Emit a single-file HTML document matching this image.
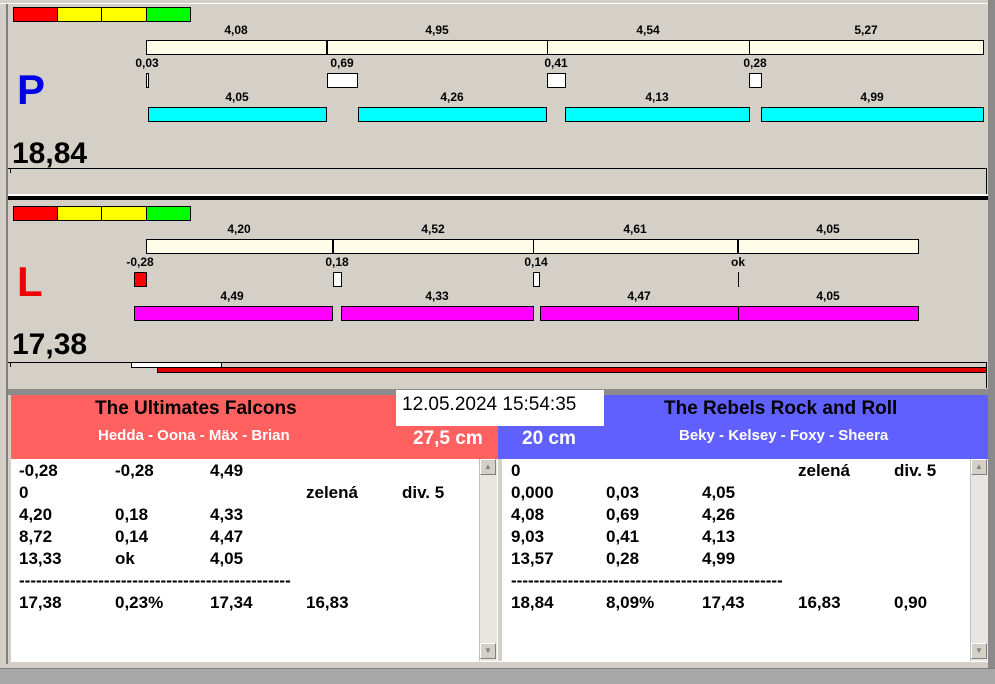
<!DOCTYPE html>
<html><head><meta charset="utf-8"><style>
*{margin:0;padding:0;box-sizing:border-box}
body{width:995px;height:684px;background:#d4d0c8;position:relative;overflow:hidden;font-family:"Liberation Sans",sans-serif;font-weight:bold}
div{position:absolute}
.l{font-size:12px;color:#000;transform:translateX(-50%);white-space:nowrap}
.b{border:1px solid #000}
.t{font-size:17px;color:#000;white-space:nowrap}
.sb{background:#e8e6e0;border-left:1px solid #c0c0c0}
.ar{width:16px;height:16px;background:#d4d0c8;border:1px solid #fff;border-right-color:#808080;border-bottom-color:#808080;font-size:8px;color:#808080;text-align:center;line-height:14px}
</style></head><body>
<div style="left:0;top:0;width:995px;height:4px;background:#d4d0c8;border-bottom:1px solid #fff"></div>
<div style="left:6px;top:4px;width:2px;height:660px;background:#808080"></div>
<div style="left:988px;top:0;width:7px;height:684px;background:#8a8a8a"></div>
<div style="left:0;top:668px;width:995px;height:16px;background:#a8a8a8;border-top:1px solid #808080"></div>

<!-- top panel -->
<div class="b" style="left:13px;top:7px;width:45px;height:15px;background:#f00"></div>
<div class="b" style="left:57px;top:7px;width:45px;height:15px;background:#ff0"></div>
<div class="b" style="left:101px;top:7px;width:46px;height:15px;background:#ff0"></div>
<div class="b" style="left:146px;top:7px;width:45px;height:15px;background:#0f0"></div>
<div class="l" style="left:236px;top:23px">4,08</div><div class="l" style="left:437px;top:23px">4,95</div><div class="l" style="left:648px;top:23px">4,54</div><div class="l" style="left:866px;top:23px">5,27</div>
<div class="b" style="left:146px;top:40px;width:838px;height:15px;background:#fffde8"></div>
<div style="left:326px;top:40px;width:2px;height:15px;background:#000"></div>
<div style="left:547px;top:40px;width:1px;height:15px;background:#000"></div>
<div style="left:749px;top:40px;width:1px;height:15px;background:#000"></div>
<div class="l" style="left:147px;top:56px">0,03</div><div class="l" style="left:342px;top:56px">0,69</div><div class="l" style="left:556px;top:56px">0,41</div><div class="l" style="left:755px;top:56px">0,28</div>
<div class="b" style="left:146px;top:73px;width:3px;height:15px;background:#fff"></div>
<div class="b" style="left:327px;top:73px;width:31px;height:15px;background:#fff"></div>
<div class="b" style="left:547px;top:73px;width:19px;height:15px;background:#fff"></div>
<div class="b" style="left:749px;top:73px;width:13px;height:15px;background:#fff"></div>
<div class="l" style="left:237px;top:90px">4,05</div><div class="l" style="left:452px;top:90px">4,26</div><div class="l" style="left:657px;top:90px">4,13</div><div class="l" style="left:872px;top:90px">4,99</div>
<div class="b" style="left:148px;top:107px;width:179px;height:15px;background:#0ff"></div>
<div class="b" style="left:358px;top:107px;width:189px;height:15px;background:#0ff"></div>
<div class="b" style="left:565px;top:107px;width:185px;height:15px;background:#0ff"></div>
<div class="b" style="left:761px;top:107px;width:223px;height:15px;background:#0ff"></div>
<div style="left:17px;top:66px;font-size:42px;color:#0000e8;line-height:48px">P</div>
<div style="left:12px;top:136px;font-size:30px;line-height:36px">18,84</div>
<div style="left:8px;top:168px;width:979px;height:1px;background:#000"></div>
<div style="left:10px;top:168px;width:1px;height:5px;background:#000"></div>
<div style="left:986px;top:168px;width:1px;height:26px;background:#000"></div>
<div style="left:8px;top:194px;width:980px;height:2px;background:#fff"></div>
<div style="left:8px;top:196px;width:980px;height:4px;background:#000"></div>

<!-- lower panel -->
<div class="b" style="left:13px;top:206px;width:45px;height:15px;background:#f00"></div>
<div class="b" style="left:57px;top:206px;width:45px;height:15px;background:#ff0"></div>
<div class="b" style="left:101px;top:206px;width:46px;height:15px;background:#ff0"></div>
<div class="b" style="left:146px;top:206px;width:45px;height:15px;background:#0f0"></div>
<div class="l" style="left:239px;top:222px">4,20</div><div class="l" style="left:433px;top:222px">4,52</div><div class="l" style="left:635px;top:222px">4,61</div><div class="l" style="left:828px;top:222px">4,05</div>
<div class="b" style="left:146px;top:239px;width:773px;height:15px;background:#fffde8"></div>
<div style="left:332px;top:239px;width:2px;height:15px;background:#000"></div>
<div style="left:533px;top:239px;width:1px;height:15px;background:#000"></div>
<div style="left:737px;top:239px;width:2px;height:15px;background:#000"></div>
<div class="l" style="left:140px;top:255px">-0,28</div><div class="l" style="left:337px;top:255px">0,18</div><div class="l" style="left:536px;top:255px">0,14</div><div class="l" style="left:738px;top:255px">ok</div>
<div class="b" style="left:134px;top:272px;width:13px;height:15px;background:#f00"></div>
<div class="b" style="left:333px;top:272px;width:9px;height:15px;background:#fff"></div>
<div class="b" style="left:533px;top:272px;width:7px;height:15px;background:#fff"></div>
<div style="left:738px;top:272px;width:1px;height:15px;background:#000"></div>
<div class="l" style="left:232px;top:289px">4,49</div><div class="l" style="left:437px;top:289px">4,33</div><div class="l" style="left:639px;top:289px">4,47</div><div class="l" style="left:828px;top:289px">4,05</div>
<div class="b" style="left:134px;top:306px;width:199px;height:15px;background:#f0f"></div>
<div class="b" style="left:341px;top:306px;width:193px;height:15px;background:#f0f"></div>
<div class="b" style="left:540px;top:306px;width:379px;height:15px;background:#f0f"></div>
<div style="left:738px;top:306px;width:1px;height:15px;background:#000"></div>
<div style="left:17px;top:258px;font-size:42px;color:#f00000;line-height:48px">L</div>
<div style="left:12px;top:327px;font-size:30px;line-height:36px">17,38</div>
<div style="left:8px;top:362px;width:979px;height:1px;background:#000"></div>
<div style="left:10px;top:362px;width:1px;height:5px;background:#000"></div>
<div class="b" style="left:131px;top:362px;width:91px;height:6px;background:#fff"></div>
<div class="b" style="left:157px;top:367px;width:830px;height:6px;background:#e00000"></div>
<div style="left:986px;top:362px;width:1px;height:26px;background:#000"></div>
<div style="left:8px;top:389px;width:980px;height:6px;background:#8c8c8c"></div>

<!-- team headers -->
<div style="left:11px;top:395px;width:487px;height:64px;background:#ff6060"></div>
<div style="left:498px;top:395px;width:490px;height:64px;background:#6060ff"></div>
<div style="left:95px;top:397px;font-size:19px;line-height:24px">The Ultimates Falcons</div>
<div style="left:98px;top:427px;font-size:15px;color:#fff">Hedda - Oona - Mäx - Brian</div>
<div style="left:664px;top:397px;font-size:19px;line-height:24px">The Rebels Rock and Roll</div>
<div style="left:679px;top:427px;font-size:15px;color:#fff">Beky - Kelsey - Foxy - Sheera</div>
<div style="left:396px;top:390px;width:208px;height:36px;background:#fff;font-weight:normal;font-size:19px;line-height:30px;padding-left:6px">12.05.2024 15:54:35</div>
<div style="left:413px;top:428px;font-size:19px;color:#fff">27,5 cm</div>
<div style="left:522px;top:428px;font-size:19px;color:#fff">20 cm</div>

<!-- lists -->
<div style="left:11px;top:459px;width:487px;height:202px;background:#fff"></div>
<div class="sb" style="left:479px;top:459px;width:18px;height:202px"></div>
<div class="ar" style="left:480px;top:459px">▲</div><div class="ar" style="left:480px;top:643px">▼</div>
<div style="left:498px;top:459px;width:4px;height:205px;background:#d4d0c8"></div>
<div style="left:502px;top:459px;width:486px;height:202px;background:#fff"></div>
<div class="sb" style="left:970px;top:459px;width:18px;height:202px"></div>
<div class="ar" style="left:971px;top:459px">▲</div><div class="ar" style="left:971px;top:643px">▼</div>
<div style="left:11px;top:661px;width:977px;height:7px;background:#d4d0c8;border-top:1px solid #fff"></div>

<div class="t" style="left:19px;top:461px">-0,28</div><div class="t" style="left:115px;top:461px">-0,28</div><div class="t" style="left:210px;top:461px">4,49</div>
<div class="t" style="left:19px;top:483px">0</div><div class="t" style="left:306px;top:483px">zelená</div><div class="t" style="left:402px;top:483px">div. 5</div>
<div class="t" style="left:19px;top:505px">4,20</div><div class="t" style="left:115px;top:505px">0,18</div><div class="t" style="left:210px;top:505px">4,33</div>
<div class="t" style="left:19px;top:527px">8,72</div><div class="t" style="left:115px;top:527px">0,14</div><div class="t" style="left:210px;top:527px">4,47</div>
<div class="t" style="left:19px;top:549px">13,33</div><div class="t" style="left:115px;top:549px">ok</div><div class="t" style="left:210px;top:549px">4,05</div>
<div class="t" style="left:19px;top:571px">------------------------------------------------</div>
<div class="t" style="left:19px;top:593px">17,38</div><div class="t" style="left:115px;top:593px">0,23%</div><div class="t" style="left:210px;top:593px">17,34</div><div class="t" style="left:306px;top:593px">16,83</div>

<div class="t" style="left:511px;top:461px">0</div><div class="t" style="left:798px;top:461px">zelená</div><div class="t" style="left:894px;top:461px">div. 5</div>
<div class="t" style="left:511px;top:483px">0,000</div><div class="t" style="left:606px;top:483px">0,03</div><div class="t" style="left:702px;top:483px">4,05</div>
<div class="t" style="left:511px;top:505px">4,08</div><div class="t" style="left:606px;top:505px">0,69</div><div class="t" style="left:702px;top:505px">4,26</div>
<div class="t" style="left:511px;top:527px">9,03</div><div class="t" style="left:606px;top:527px">0,41</div><div class="t" style="left:702px;top:527px">4,13</div>
<div class="t" style="left:511px;top:549px">13,57</div><div class="t" style="left:606px;top:549px">0,28</div><div class="t" style="left:702px;top:549px">4,99</div>
<div class="t" style="left:511px;top:571px">------------------------------------------------</div>
<div class="t" style="left:511px;top:593px">18,84</div><div class="t" style="left:606px;top:593px">8,09%</div><div class="t" style="left:702px;top:593px">17,43</div><div class="t" style="left:798px;top:593px">16,83</div><div class="t" style="left:894px;top:593px">0,90</div>
</body></html>
